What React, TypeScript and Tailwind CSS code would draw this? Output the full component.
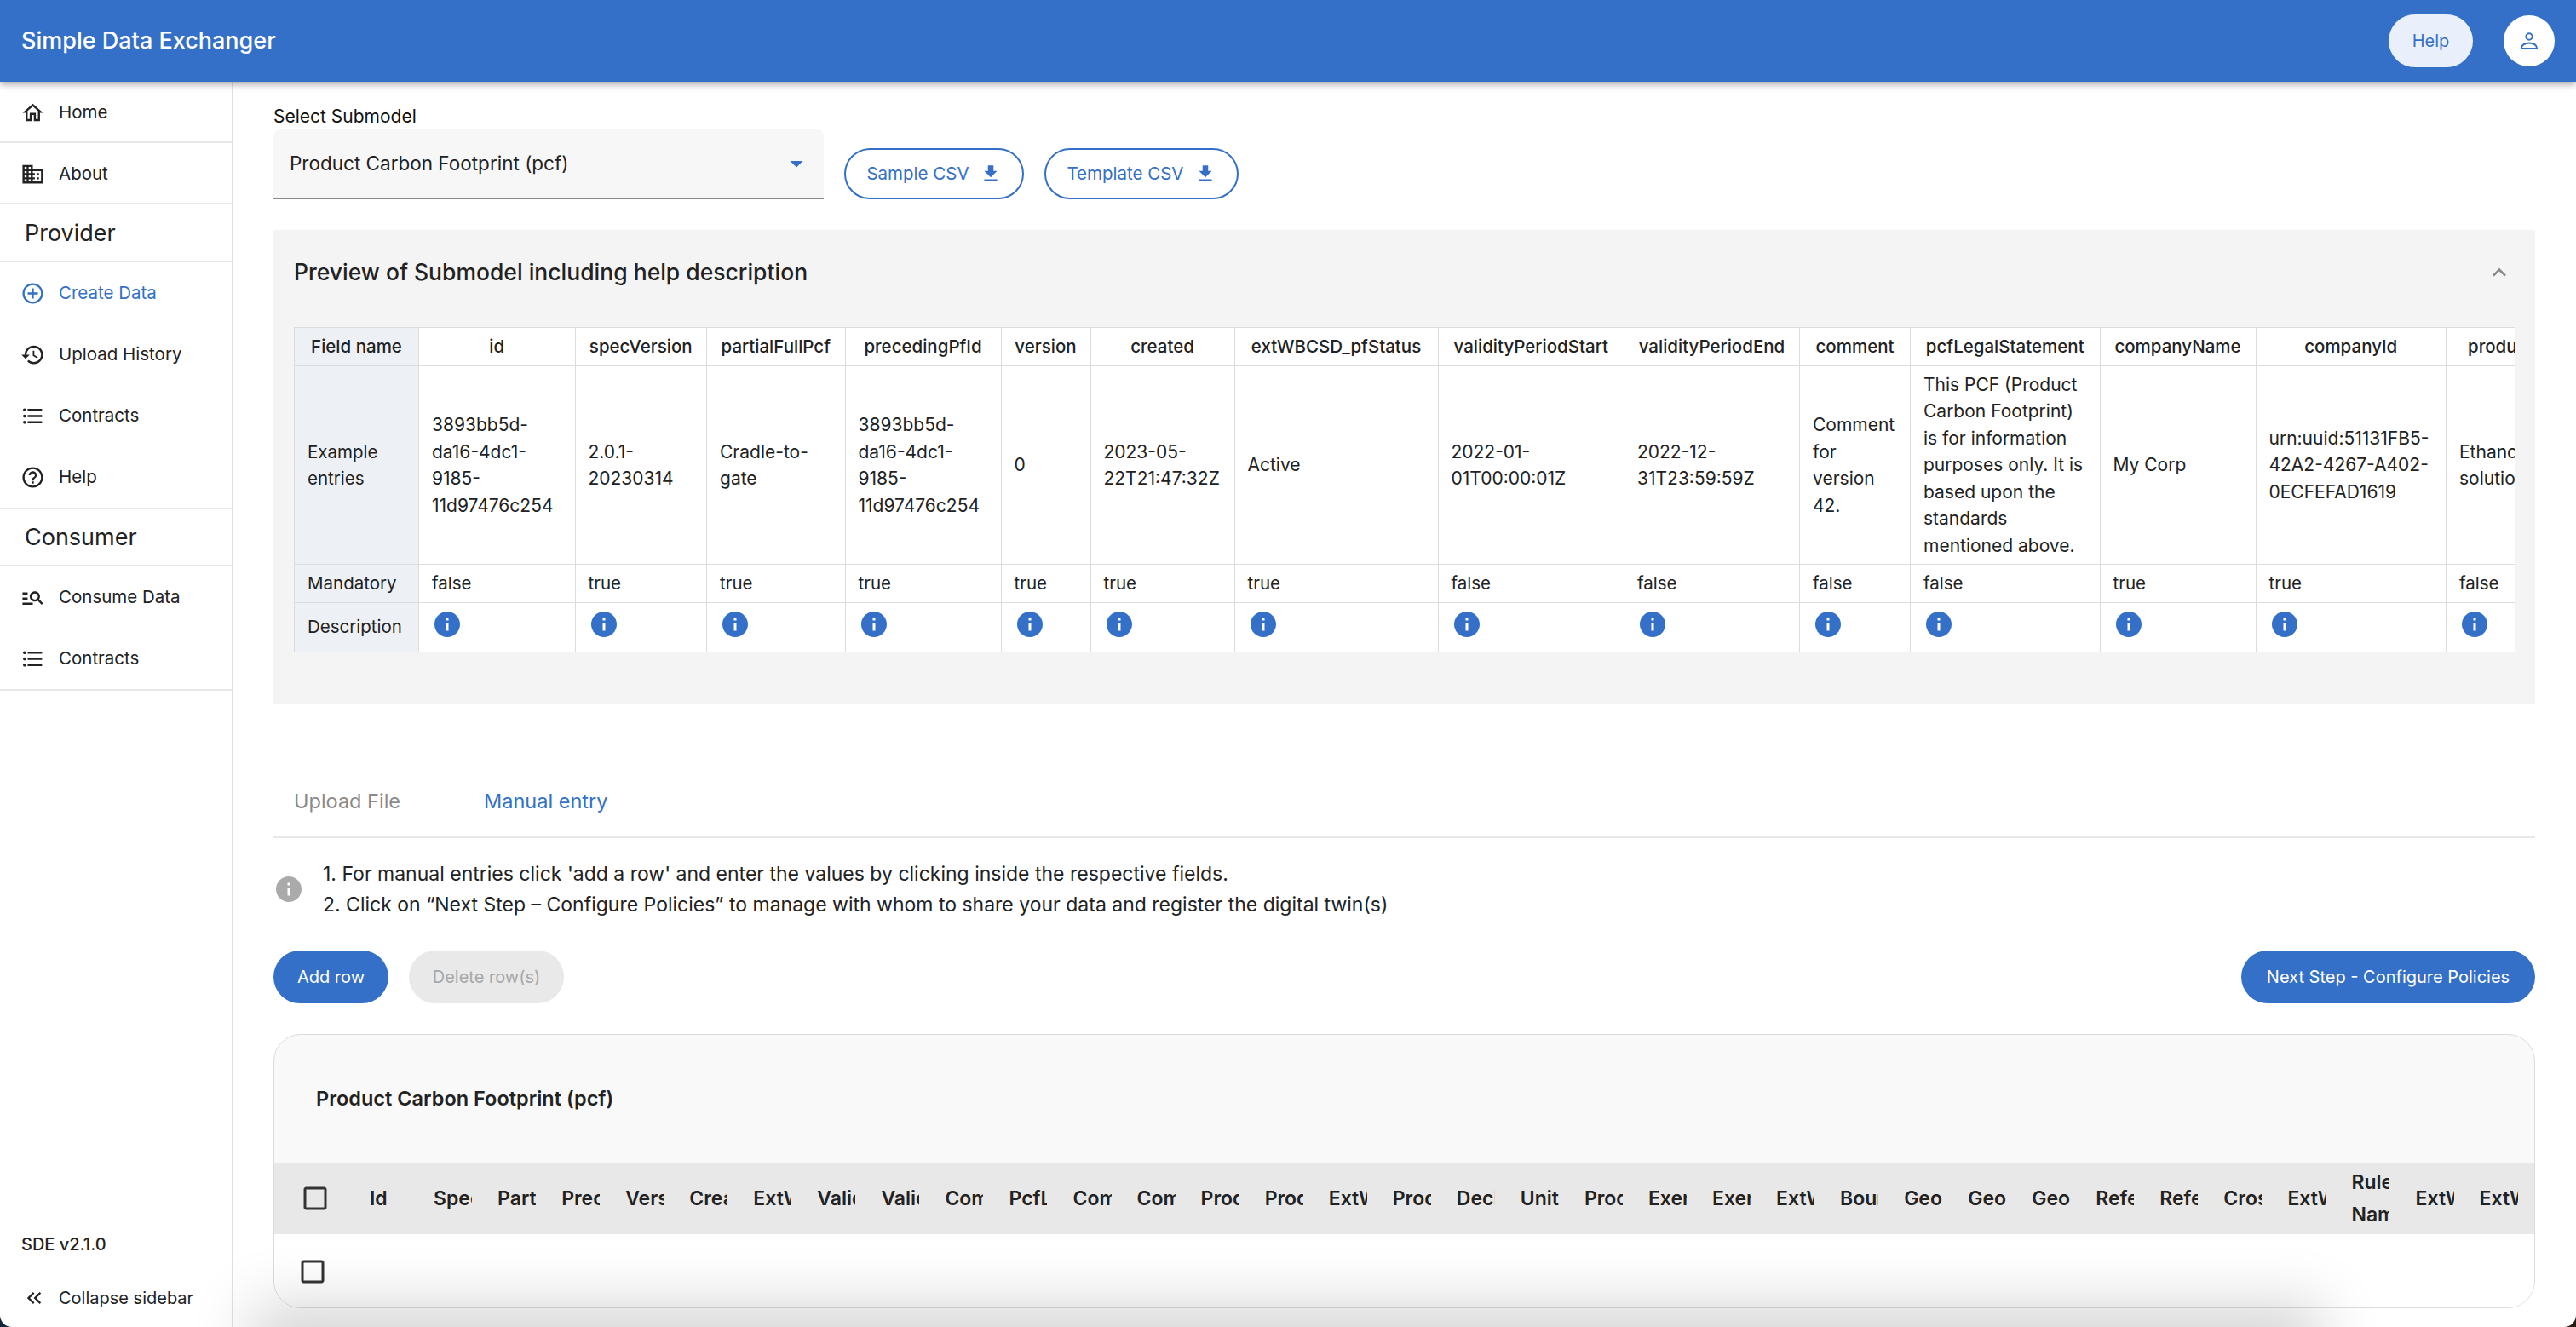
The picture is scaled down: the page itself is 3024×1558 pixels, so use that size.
import type { ReactNode } from "react";
import {
  MdAddCircleOutline,
  MdArrowDropDown,
  MdCheckBoxOutlineBlank,
  MdDomain,
  MdExpandLess,
  MdFileDownload,
  MdFormatListBulleted,
  MdHelpOutline,
  MdHistory,
  MdInfo,
  MdKeyboardDoubleArrowLeft,
  MdManageSearch,
  MdOutlineHome,
} from "react-icons/md";

const previewColumns = [
  { name: "id", width: 183.5, lines: ["3893bb5d-", "da16-4dc1-", "9185-", "11d97476c254"], mandatory: "false" },
  { name: "specVersion", width: 154.5, lines: ["2.0.1-", "20230314"], mandatory: "true" },
  { name: "partialFullPcf", width: 162.5, lines: ["Cradle-to-", "gate"], mandatory: "true" },
  { name: "precedingPfId", width: 183, lines: ["3893bb5d-", "da16-4dc1-", "9185-", "11d97476c254"], mandatory: "true" },
  { name: "version", width: 105, lines: ["0"], mandatory: "true" },
  { name: "created", width: 169, lines: ["2023-05-", "22T21:47:32Z"], mandatory: "true" },
  { name: "extWBCSD_pfStatus", width: 239, lines: ["Active"], mandatory: "true" },
  { name: "validityPeriodStart", width: 218.5, lines: ["2022-01-", "01T00:00:01Z"], mandatory: "false" },
  { name: "validityPeriodEnd", width: 206, lines: ["2022-12-", "31T23:59:59Z"], mandatory: "false" },
  { name: "comment", width: 130, lines: ["Comment", "for", "version", "42."], mandatory: "false" },
  {
    name: "pcfLegalStatement",
    width: 222.5,
    lines: ["This PCF (Product", "Carbon Footprint)", "is for information", "purposes only. It is", "based upon the", "standards", "mentioned above."],
    mandatory: "false",
  },
  { name: "companyName", width: 183, lines: ["My Corp"], mandatory: "true" },
  { name: "companyId", width: 223.5, lines: ["urn:uuid:51131FB5-", "42A2-4267-A402-", "0ECFEFAD1619"], mandatory: "true" },
  { name: "productDescription", width: 240, lines: ["Ethanol, 95%", "solution"], mandatory: "false" },
];

const gridColumns = [
  "Id",
  "Spec Version",
  "Partial Full Pcf",
  "Preceding Pf Id",
  "Version",
  "Created",
  "ExtWBCSD Pf Status",
  "Validity Period Start",
  "Validity Period End",
  "Comment",
  "PcfLegal Statement",
  "Company Name",
  "Company Id",
  "Product Description",
  "Product Ids",
  "ExtWBCSD Product Code",
  "Product Category",
  "Declared Unit",
  "Unitary Product Amount",
  "Product Mass",
  "Exempted Percent",
  "Exempted Description",
  "ExtWBCSD Packaging",
  "Boundary Processes",
  "Geography Country",
  "Geography Subdivision",
  "Geography Region",
  "Reference Start",
  "Reference End",
  "Cross Sectoral",
  "ExtWBCSD Operator",
  "Rule Name",
  "ExtWBCSD Allocation",
  "ExtWBCSD Fossil",
];

function NavItem({ icon, label, active, first }: { icon: ReactNode; label: string; active?: boolean; first?: boolean }) {
  return (
    <div className={`flex items-center pl-[24px] ${first ? "h-[70px] pt-[2px]" : "h-[72px]"} ${active ? "text-[#3470c7]" : "text-[#222]"}`}>
      <span className="flex w-[45px] text-[29px]">{icon}</span>
      <span className="text-[20.5px]">{label}</span>
    </div>
  );
}

function Sidebar() {
  return (
    <aside className="flex w-[273px] shrink-0 flex-col border-r border-[#e0e0e0]">
      <div className="border-b-2 border-[#e8e8e8]">
        <NavItem first icon={<MdOutlineHome />} label="Home" />
      </div>
      <div className="border-b-2 border-[#e8e8e8]">
        <NavItem first icon={<MdDomain />} label="About" />
      </div>
      <div className="flex h-[68px] items-center border-b-2 border-[#e8e8e8] pl-[29px] pt-[2px] text-[27px] text-[#222]">Provider</div>
      <div className="border-b-2 border-[#e8e8e8]">
        <NavItem icon={<MdAddCircleOutline />} label="Create Data" active />
        <NavItem icon={<MdHistory />} label="Upload History" />
        <NavItem icon={<MdFormatListBulleted />} label="Contracts" />
        <NavItem icon={<MdHelpOutline />} label="Help" />
      </div>
      <div className="flex h-[67px] items-center border-b-2 border-[#e8e8e8] pl-[29px] pt-[2px] text-[27px] text-[#222]">Consumer</div>
      <div className="border-b-2 border-[#e8e8e8]">
        <NavItem icon={<MdManageSearch />} label="Consume Data" />
        <NavItem icon={<MdFormatListBulleted />} label="Contracts" />
      </div>
      <div className="mt-auto pb-[14px]">
        <div className="mb-[28px] pl-[25px] text-[20px] font-medium text-[#222]">SDE v2.1.0</div>
        <div className="flex h-[40px] items-center pl-[26px] text-[#222]">
          <MdKeyboardDoubleArrowLeft className="mr-[15px] text-[28px]" />
          <span className="text-[20px]">Collapse sidebar</span>
        </div>
      </div>
    </aside>
  );
}

function PreviewTable() {
  return (
    <div className="ml-[24px] mr-[24px] mt-[14px] overflow-hidden">
      <table className="w-[2765px] table-fixed border-collapse bg-white text-[20.5px] text-[#222]">
        <colgroup>
          <col className="w-[146px]" />
          {previewColumns.map((c) => (
            <col key={c.name} style={{ width: c.width }} />
          ))}
        </colgroup>
        <tbody>
          <tr className="h-[45px] font-medium">
            <td className="border border-[#dcdcdc] bg-[#edf0f5] text-center">Field name</td>
            {previewColumns.map((c) => (
              <td key={c.name} className="whitespace-nowrap border border-[#dcdcdc] text-center">
                {c.name}
              </td>
            ))}
          </tr>
          <tr className="h-[233px] leading-[31.5px]">
            <td className="border border-[#dcdcdc] bg-[#edf0f5] pl-[15px]">
              Example
              <br />
              entries
            </td>
            {previewColumns.map((c) => (
              <td key={c.name} className="whitespace-nowrap border border-[#dcdcdc] pl-[15px] text-[21px]">
                {c.lines.map((l) => (
                  <div key={l}>{l}</div>
                ))}
              </td>
            ))}
          </tr>
          <tr className="h-[45px]">
            <td className="border border-[#dcdcdc] bg-[#edf0f5] pl-[15px]">Mandatory</td>
            {previewColumns.map((c) => (
              <td key={c.name} className="border border-[#dcdcdc] pl-[15px]">
                {c.mandatory}
              </td>
            ))}
          </tr>
          <tr className="h-[57px]">
            <td className="border border-[#dcdcdc] bg-[#edf0f5] pl-[15px]">Description</td>
            {previewColumns.map((c) => (
              <td key={c.name} className="border border-[#dcdcdc] pb-[14px] pl-[15px] pt-[7px]">
                <MdInfo className="text-[36px] text-[#3470c7]" />
              </td>
            ))}
          </tr>
        </tbody>
      </table>
    </div>
  );
}

function OutlineButton({ label, width }: { label: string; width: string }) {
  return (
    <button className={`flex h-[60px] items-center justify-center gap-[12px] rounded-full border-2 border-[#3470c7] text-[20.5px] text-[#3470c7] ${width}`}>
      {label}
      <MdFileDownload className="text-[26px]" />
    </button>
  );
}

function DataGrid() {
  return (
    <div className="mt-[36px] h-[322px] overflow-hidden rounded-[32px] border border-[#dcdcdc] bg-[#f9f9f9]">
      <div className="flex h-[150px] items-center pb-[1px] pl-[49px] text-[23.5px] font-semibold text-[#222]">
        Product Carbon Footprint (pcf)
      </div>
      <div className="flex h-[84px] items-center bg-[#e8e8e8] text-[23px] font-semibold text-[#222]">
        <div className="flex w-[112px] shrink-0 pl-[30px]">
          <MdCheckBoxOutlineBlank className="text-[36px] text-[#333]" />
        </div>
        {gridColumns.map((name, i) => (
          <div key={i} className={`mr-[30.05px] w-[45px] shrink-0 overflow-hidden ${name === "Rule Name" ? "leading-[38px]" : "whitespace-nowrap"}`}>
            {name}
          </div>
        ))}
      </div>
      <div className="flex h-[87px] items-center bg-white pl-[27px]">
        <MdCheckBoxOutlineBlank className="text-[36px] text-[#333]" />
      </div>
    </div>
  );
}

export default function App() {
  return (
    <div className="h-[1558px] w-[3024px] bg-[linear-gradient(90deg,#12283a_50%,#2a1a10_50%)] font-['Inter',Arial,sans-serif]">
      <div className="relative flex h-[1558px] w-[3024px] flex-col overflow-hidden rounded-b-[14px] bg-white">
        <header className="relative z-10 flex h-[96px] shrink-0 items-center justify-between bg-[#3470c7] pl-[25px] pr-[25px] shadow-[0_3px_8px_rgba(0,0,0,0.35)]">
          <div className="text-[27px] font-medium text-white">Simple Data Exchanger</div>
          <div className="flex items-center gap-[36px]">
            <button className="flex h-[62px] w-[99px] items-center justify-center rounded-full bg-[#e9f0fb] text-[20px] text-[#3470c7]">Help</button>
            <button className="flex h-[60px] w-[60px] items-center justify-center rounded-full bg-white">
              <svg viewBox="0 0 20 20" width="20" height="20" fill="none" stroke="#3470c7" strokeWidth="2">
                <circle cx="10" cy="5" r="3.7" />
                <path d="M1 19v-.8c0-3 4-5.8 9-5.8s9 2.8 9 5.8v.8z" />
              </svg>
            </button>
          </div>
        </header>
        <div className="flex min-h-0 flex-1">
          <Sidebar />
          <main className="min-w-0 flex-1 px-[48px] pt-[27px]">
            <div className="text-[21px] leading-[28px] text-[#111]">Select Submodel</div>
            <div className="mt-[1px] flex items-end gap-[24px]">
              <div className="flex h-[82px] w-[646px] items-center justify-between rounded-t-[8px] border-b-2 border-[#8a8a8a] bg-[#f7f7f7] pl-[19px] pr-[14px]">
                <span className="text-[22.5px] text-[#222]">Product Carbon Footprint (pcf)</span>
                <MdArrowDropDown className="text-[36px] text-[#3470c7]" />
              </div>
              <OutlineButton label="Sample CSV" width="w-[211px]" />
              <OutlineButton label="Template CSV" width="w-[228px]" />
            </div>

            <section className="mt-[36px] h-[556px] bg-[#f4f4f4]">
              <div className="flex h-[100px] items-center justify-between pl-[24px] pr-[26px]">
                <span className="text-[26.5px] font-medium text-[#222]">Preview of Submodel including help description</span>
                <MdExpandLess className="text-[32px] text-[#888]" />
              </div>
              <PreviewTable />
            </section>

            <div className="mt-[74px] flex h-[84px] items-center border-b-2 border-[#e8e8e8] pl-[24px] text-[23.5px]">
              <span className="w-[223px] text-[#8a8a8a]">Upload File</span>
              <span className="text-[#3470c7]">Manual entry</span>
            </div>

            <div className="mt-[24px] flex items-center text-[23px] leading-[36px] text-[#222]">
              <MdInfo className="mr-[22px] text-[36px] text-[#aaa]" />
              <ol>
                <li>1. For manual entries click 'add a row' and enter the values by clicking inside the respective fields.</li>
                <li>2. Click on “Next Step – Configure Policies” to manage with whom to share your data and register the digital twin(s)</li>
              </ol>
            </div>

            <div className="mt-[36px] flex items-center justify-between text-[20px]">
              <div className="flex gap-[24px]">
                <button className="h-[62px] w-[135px] rounded-full bg-[#3470c7] text-white">Add row</button>
                <button className="h-[62px] w-[182px] rounded-full bg-[#e9e9e9] text-[#a8a8a8]">Delete row(s)</button>
              </div>
              <button className="h-[62px] w-[345px] rounded-full bg-[#3470c7] text-white">Next Step - Configure Policies</button>
            </div>

            <DataGrid />
          </main>
        </div>
        <div className="pointer-events-none absolute left-[330px] top-[1566px] h-[20px] w-[2360px] shadow-[0_0_70px_35px_rgba(0,0,0,0.17)]" />
      </div>
    </div>
  );
}
